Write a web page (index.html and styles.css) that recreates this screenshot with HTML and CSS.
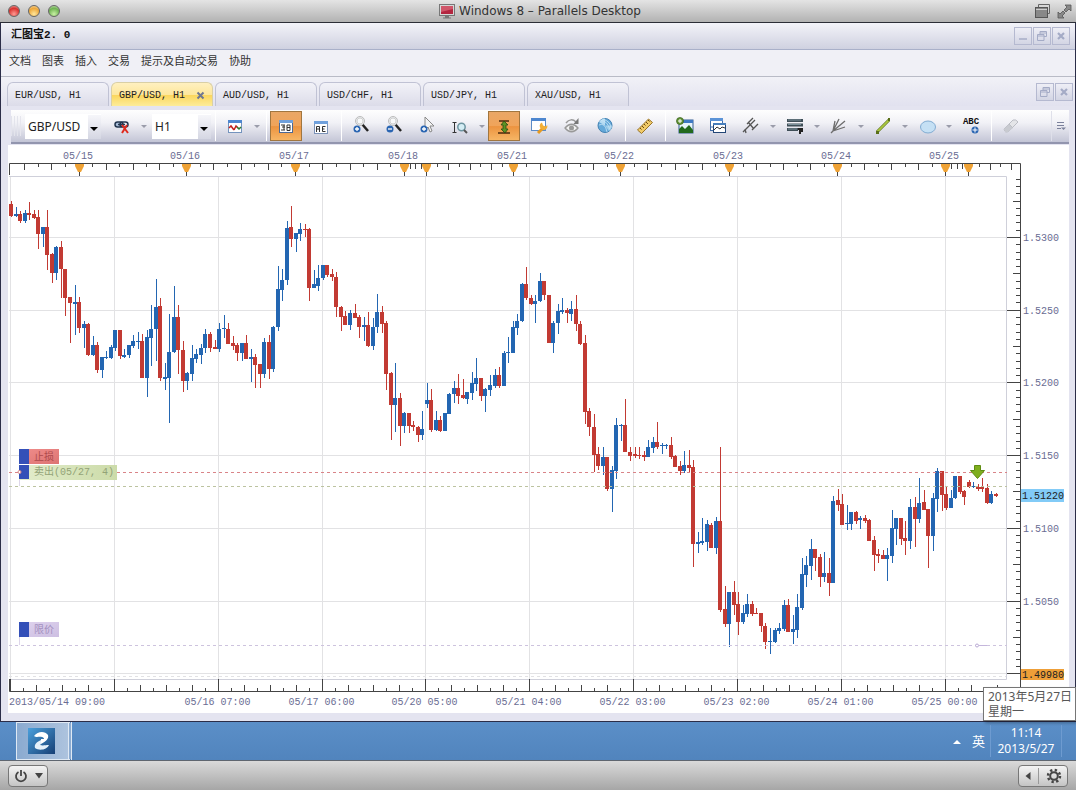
FILE: index.html
```
<!DOCTYPE html>
<html lang="zh-CN">
<head>
    <meta charset="UTF-8">
    <meta name="viewport" content="width=device-width, initial-scale=1.0">
    <title>Windows 8 – Parallels Desktop</title>
    <link rel="stylesheet" href="styles.css">
</head>
<body>

    <header class="mac-bar">
        <div class="lights">
            <button class="light red" aria-label="Close"></button>
            <button class="light yellow" aria-label="Minimize"></button>
            <button class="light green" aria-label="Zoom"></button>
        </div>
        <h1>
            <svg width="16" height="15" viewBox="0 0 16 15"><rect x=".5" y=".5" width="15" height="11" fill="#d5d8d8" stroke="#777"/><rect x="2" y="2" width="12" height="8" fill="#b32640"/><path d="M2 2h12v3L2 8z" fill="#d0566a"/><path d="M6 12h4v1.500h2v1H4v-1h2z" fill="#777"/></svg>
            Windows 8 – Parallels Desktop
        </h1>
        <div class="mac-right">
            <button aria-label="Windows"><svg width="15" height="15" viewBox="0 0 15 15"><path d="M3.500 3V.5h11v9H13" fill="none" stroke="#666"/><rect x=".5" y="3.500" width="12" height="10" fill="#888" stroke="#555"/><path d="M1 5.500h11" stroke="#ccc"/></svg></button>
            <button aria-label="Full screen"><svg width="15" height="15" viewBox="0 0 15 15"><path d="M8 1h6v6l-2-2-3 3-2-2 3-3zM1 8l2 2 3-3 2 2-3 3 2 2H1z" fill="#888" stroke="#555" stroke-width=".8"/></svg></button>
        </div>
    </header>

    <div class="app">
        <div class="app-title">
            <h2>汇图宝2. 0</h2>
            <div class="win-buttons">
                <button aria-label="最小化"><svg width="12" height="12" viewBox="0 0 12 12"><path d="M2 9h8" stroke="#b4b9d0" stroke-width="2"/></svg></button>
                <button aria-label="还原"><svg width="12" height="12" viewBox="0 0 12 12"><path d="M4 4V1.500h6.500v5H8M4 3h6M1.500 4.500H8v6H1.500zM2 6h6" fill="none" stroke="#a4abc6"/></svg></button>
                <button aria-label="关闭"><svg width="12" height="12" viewBox="0 0 12 12"><path d="M3 3l6 6M9 3l-6 6" stroke="#a4abc6" stroke-width="2.200"/></svg></button>
            </div>
        </div>

        <nav class="menu">
            <button>文档</button>
            <button>图表</button>
            <button>插入</button>
            <button>交易</button>
            <button>提示及自动交易</button>
            <button>协助</button>
        </nav>

        <div class="tabs">
            <button class="tab">EUR/USD, H1</button>
            <button class="tab active">GBP/USD, H1 <svg width="9" height="9" viewBox="0 0 9 9"><path d="M1.500 1.500l6 6M7.500 1.500l-6 6" stroke="#6f7791" stroke-width="2"/></svg></button>
            <button class="tab">AUD/USD, H1</button>
            <button class="tab">USD/CHF, H1</button>
            <button class="tab">USD/JPY, H1</button>
            <button class="tab">XAU/USD, H1</button>
            <div class="win-buttons">
                <button aria-label="还原图表"><svg width="12" height="12" viewBox="0 0 12 12"><path d="M4 4V1.500h6.500v5H8M4 3h6M1.500 4.500H8v6H1.500zM2 6h6" fill="none" stroke="#a4abc6"/></svg></button>
                <button aria-label="关闭图表"><svg width="12" height="12" viewBox="0 0 12 12"><path d="M3 3l6 6M9 3l-6 6" stroke="#a4abc6" stroke-width="2.200"/></svg></button>
            </div>
        </div>

        <div class="toolbar">
            <span class="grip"></span>
            <span class="combo symbol">
                <select aria-label="Symbol"><option>GBP/USD</option><option>EUR/USD</option></select>
            </span>
            <button class="tool" aria-label="Unlink"><svg width="18" height="18" viewBox="0 0 18 18"><rect x="2" y="5" width="8" height="5" rx="2.500" fill="#a9bdd8" stroke="#23364f" stroke-width="1.500"/><rect x="7" y="5" width="8" height="5" rx="2.500" fill="none" stroke="#23364f" stroke-width="1.500"/><path d="M5 7.500h7" stroke="#23364f" stroke-width="1.500"/><path d="M9 8l6 8M14 8l-5 8" stroke="#df2b1e" stroke-width="2"/></svg></button>
            <button class="drop" aria-label="Link options"></button>
            <span class="combo period">
                <select aria-label="Period"><option>H1</option><option>H4</option></select>
            </span>
            <span class="sep"></span>
            <button class="tool" aria-label="Chart type"><svg width="16" height="16" viewBox="0 0 16 16"><rect x="1.500" y="2.500" width="13" height="12" fill="#fff" stroke="#7493bd"/><path d="M1 2h14v3H1z" fill="#4d86cf"/><path d="M2 10l2-2 3 4" fill="none" stroke="#c4201c" stroke-width="1.500"/><path d="M7 12l2-4 2 2" fill="none" stroke="#c4201c" stroke-width="1.500"/><path d="M10 9l2 2 2-2" fill="none" stroke="#2c7a2b" stroke-width="1.500"/></svg></button>
            <button class="drop" aria-label="Chart types"></button>
            <span class="sep"></span>
            <button class="tool on" aria-label="Info panel"><svg width="16" height="16" viewBox="0 0 16 16"><rect x="1.500" y="2.500" width="13" height="12" fill="#fff" stroke="#4c6894"/><path d="M1 2h14v3H1z" fill="#6fa0dc"/><path d="M3 7h4M4 9h3M3 12h4M6 7v5M9 7v5.500h3V7zM9 9.500h3" fill="none" stroke="#333"/></svg></button>
            <button class="tool" aria-label="Labels"><svg width="16" height="16" viewBox="0 0 16 16"><rect x="1.500" y="3.500" width="13" height="12" fill="#fff" stroke="#7c93b8"/><path d="M1 3h14v3H1z" fill="#6fa0dc"/><path d="M3.500 14V8.500h3V14M3.500 11h3M12.500 8.500h-3v5h3M9.500 11h2" fill="none" stroke="#333"/></svg></button>
            <span class="sep"></span>
            <button class="tool" aria-label="Zoom in"><svg width="18" height="20" viewBox="0 0 18 20"><path d="M10 8l6 7" stroke="#222" stroke-width="2.500"/><circle cx="8" cy="5" r="4.500" fill="#e9ecef" stroke="#bbb"/><circle cx="8" cy="5" r="3" fill="#f8f9fa" stroke="#d0d0d0"/><circle cx="5" cy="13" r="3.500" fill="#2a65b2"/><path d="M5 11v4M3 13h4" stroke="#fff" stroke-width="1.300"/></svg></button>
            <button class="tool" aria-label="Zoom out"><svg width="18" height="20" viewBox="0 0 18 20"><path d="M10 8l6 7" stroke="#222" stroke-width="2.500"/><circle cx="8" cy="5" r="4.500" fill="#e9ecef" stroke="#bbb"/><circle cx="8" cy="5" r="3" fill="#f8f9fa" stroke="#d0d0d0"/><circle cx="5" cy="13" r="3.500" fill="#2a65b2"/><path d="M3 13h4" stroke="#fff" stroke-width="1.300"/></svg></button>
            <button class="tool" aria-label="Cursor"><svg width="18" height="20" viewBox="0 0 18 20"><path d="M7 1v13l3-3 2 5 2-1-2-5h4z" fill="#f4f4f4" stroke="#888"/><circle cx="6" cy="13" r="3.500" fill="#2a65b2"/><path d="M6 11v4M4 13h4" stroke="#fff" stroke-width="1.300"/></svg></button>
            <button class="tool" aria-label="Fit scale"><svg width="18" height="20" viewBox="0 0 18 20"><path d="M3.500 6v11M1.500 6.500h4M1.500 16.500h4" fill="none" stroke="#333"/><circle cx="10.500" cy="11" r="3.700" fill="#d4edf4" stroke="#6d95a1" stroke-width="1.500"/><path d="M13 14l3 3" stroke="#555" stroke-width="2"/></svg></button>
            <button class="drop" aria-label="Scale options"></button>
            <button class="tool on" aria-label="Auto scale"><svg width="18" height="20" viewBox="0 0 18 20"><path d="M4 5h10M3 17h12" stroke="#4b2a0c" stroke-width="1.300"/><path d="M9 5l4 4h-2v4h2l-3 4-4-4h2V9H6z" fill="#5b9224" stroke="#274d10" stroke-width=".8"/></svg></button>
            <button class="tool" aria-label="Settings"><svg width="18" height="20" viewBox="0 0 18 20"><rect x="1.500" y="2.500" width="14" height="12" fill="#fff" stroke="#5d8cc6"/><path d="M1 2h15v3H1z" fill="#4d86cf"/><path d="M8 17l5-5" stroke="#e79a20" stroke-width="3"/><path d="M12 6.500l1 3 3 1 1-1.500a3.500 3.500 0 0 1-6 3.500 3.500 3.500 0 0 1 1-6z" fill="#f2ae35"/></svg></button>
            <button class="tool" aria-label="Visibility"><svg width="18" height="20" viewBox="0 0 18 20"><path d="M2 12c4-5 9-5 13 0-4 5-9 5-13 0z" fill="#f0f0f0" stroke="#999" stroke-width="1.300"/><circle cx="8.500" cy="12" r="2.500" fill="#999"/><path d="M3 7c3-4 7-4 10-1" fill="none" stroke="#999" stroke-width="1.500"/><path d="M15.500 2v6h-5z" fill="#777"/></svg></button>
            <button class="tool" aria-label="Globe"><svg width="18" height="18" viewBox="0 0 18 18"><circle cx="9" cy="8.500" r="7" fill="#65a9d9" stroke="#4382b3"/><path d="M9 8.500V1.500A7 7 0 0 0 3 5z" fill="#b6dcf3"/><path d="M9 8.500h7a7 7 0 0 1-3 5.500z" fill="#a1cfeb"/><path d="M5 3.500q6 0 9 9M3 8q6-3 8 7M7 2q8 3 8 9" fill="none" stroke="#c9e6f6" stroke-width=".8"/></svg></button>
            <span class="sep"></span>
            <button class="tool" aria-label="Ruler"><svg width="18" height="18" viewBox="0 0 18 18"><path d="M1.500 13L12.500 2l4 3.500-11 11z" fill="#f1cb69" stroke="#987327"/><path d="M4 11l1.500 1.500M6 9l2 2M8 7l1.500 1.500M10 5l2 2M12 3l1.500 1.500" stroke="#6d4b13"/></svg></button>
            <span class="sep"></span>
            <button class="tool" aria-label="Add picture"><svg width="18" height="18" viewBox="0 0 18 18"><rect x="3" y="3" width="14" height="13" fill="#e6f3fb" stroke="#345e91"/><path d="M3 3h14v3H3z" fill="#3e79c4"/><path d="M3 16v-4l3-3 3 3 4-4 4 5v3z" fill="#22691d"/><circle cx="4" cy="4" r="3.500" fill="#659638" stroke="#355b18" stroke-width=".7"/><path d="M4 2v4M2 4h4" stroke="#fff"/></svg></button>
            <button class="tool" aria-label="Windows"><svg width="18" height="20" viewBox="0 0 18 20"><rect x="1.500" y="2.500" width="12" height="12" fill="#fff" stroke="#426ea8"/><path d="M1 2h13v3H1z" fill="#5b93d7"/><rect x="4.500" y="7.500" width="12" height="9" fill="#fff" stroke="#234676"/><path d="M4 7h13v2H4z" fill="#477ebc"/><path d="M5 14l3-3 3 2 2-2 3 1" fill="none" stroke="#333"/><path d="M1 11h3" stroke="#426ea8"/></svg></button>
            <button class="tool" aria-label="Pitchfork"><svg width="18" height="18" viewBox="0 0 18 18"><path d="M1 15L13 3M6 5l6 7M5 7l6-6M10 13l6-6M3 12l1 4" fill="none" stroke="#555" stroke-width="1.300"/></svg></button>
            <button class="drop" aria-label="Pitchforks"></button>
            <button class="tool" aria-label="Fibonacci"><svg width="18" height="20" viewBox="0 0 18 20"><path d="M1 4.500h16M1 9h16M1 13.500h11" stroke="#3f4e57" stroke-width="3"/><path d="M2 4h13M2 8.500h13M2 13h9" stroke="#8aa2ac" stroke-width=".8"/><path d="M12 13h4v2h-2v3" fill="none" stroke="#222" stroke-width="2"/></svg></button>
            <button class="drop" aria-label="Fibonacci tools"></button>
            <button class="tool" aria-label="Fan"><svg width="18" height="18" viewBox="0 0 18 18"><path d="M3 14L5 4M3 14l6-12M3 14L15 4M3 14l12-4M1 16l3-3" stroke="#6d6d6d" stroke-width="1.300"/></svg></button>
            <button class="drop" aria-label="Fans"></button>
            <button class="tool" aria-label="Line"><svg width="18" height="20" viewBox="0 0 18 20"><path d="M3 16L15 4" stroke="#596f18" stroke-width="3"/><path d="M3 16L15 4" stroke="#a9c541" stroke-width="1.800"/><path d="M2 15h3v3H2zM14 2h2v3h-2z" fill="#596f18"/></svg></button>
            <button class="drop" aria-label="Lines"></button>
            <button class="tool" aria-label="Ellipse"><svg width="18" height="20" viewBox="0 0 18 20"><ellipse cx="10" cy="11" rx="7.500" ry="6" fill="#c5e0f4" stroke="#81acd2"/></svg></button>
            <button class="drop" aria-label="Shapes"></button>
            <button class="tool text-tool" aria-label="Add text"><b>ABC</b><svg width="8" height="8" viewBox="0 0 8 8"><circle cx="4" cy="4" r="3.500" fill="#2a65b2"/><path d="M4 1.500v5M1.500 4h5" stroke="#fff"/></svg></button>
            <span class="sep"></span>
            <button class="tool" aria-label="Eraser"><svg width="18" height="18" viewBox="0 0 18 18"><path d="M2 12l9-9q3-1 5 2L7 14q-4 3-5-2z" fill="#e4e5e8" stroke="#bbbdc4"/><path d="M7 7l4 4" stroke="#b2b4bb"/><path d="M2 12l5-5 4 4-4 3q-4 3-5-2z" fill="#c8cad0"/></svg></button>
            <button class="more" aria-label="More"><svg width="10" height="10" viewBox="0 0 10 10"><path d="M1 1.500h7M1 4.500h7M1 7.500h4" stroke="#7b819b"/><path d="M5 6.500h5L7.500 9z" fill="#7b819b"/></svg></button>
        </div>

        <div class="chart-panel">
            <svg id="chart" viewBox="8 145 1061 568" role="img" aria-label="GBP/USD H1">
                <defs>
                    <linearGradient id="sellFill" x2="1"><stop offset="0" stop-color="#e3edcc"/><stop offset="1" stop-color="#ccdba9"/></linearGradient>
                    <linearGradient id="stopFill" y2="1"><stop offset="0" stop-color="#f08d8b"/><stop offset="1" stop-color="#dd7473"/></linearGradient>
                    <linearGradient id="limitFill" y2="1"><stop offset="0" stop-color="#dfd3ee"/><stop offset="1" stop-color="#cdbfe2"/></linearGradient>
                </defs>
                <g id="grid"></g>
                <g id="candles"></g>
                <g id="axes"></g>

                <g class="orders">
                    <path class="dash stop" d="M9 472.500h998"/>
                    <path class="dash sell" d="M9 486.500h998"/>
                    <path class="dash limit" d="M9 645.500h998"/>
                    <path d="M19.500 479v7M19.500 637v8" stroke="#ddd6ea"/>
                    <rect x="19" y="449" width="40" height="15" fill="url(#stopFill)"/>
                    <rect x="19" y="465" width="98" height="15" fill="url(#sellFill)"/>
                    <rect x="19" y="622" width="40" height="15" fill="url(#limitFill)"/>
                    <path d="M19 449h10v15H19zM19 465h10v14H19zM19 622h10v15H19z" fill="#3450b8"/>
                    <circle cx="19.500" cy="472" r="1.500" fill="#fff" stroke="#d98a8a"/>
                    <circle cx="977" cy="645.500" r="1.500" fill="#fff" stroke="#b9a9d4"/>
                    <path d="M979 645.500h8" stroke="#c4b6dc"/>
                    <text x="34" y="460" fill="#ae4a4c">止损</text>
                    <text x="34" y="475" fill="#93a377">卖出(05/27, 4)</text>
                    <text x="34" y="633" fill="#a28fbe">限价</text>
                    <path d="M974.500 465.500h6v5h4l-7 8-7-8h4z" fill="#7fae1e" stroke="#5f8c12"/>
                </g>

                <rect x="1021" y="489" width="43" height="13" fill="#82cbf7"/>
                <rect x="1021" y="669" width="43" height="11" fill="#ee9f38"/>
                <text class="price-tag" x="1022" y="499">1.51220</text>
                <text class="price-tag" x="1022" y="678">1.49980</text>
            </svg>
        </div>
    </div>

    <div class="taskbar">
        <button class="task" aria-label="汇图宝">
            <svg width="28" height="28" viewBox="0 0 28 28"><defs><linearGradient id="logo" x2="1" y2="1"><stop offset="0" stop-color="#4ba0dc"/><stop offset="1" stop-color="#163f75"/></linearGradient></defs><rect y="1" width="27" height="26" fill="url(#logo)"/><path d="M6 9c4-5 11-5 14-1 1 4-2 6-7 9v-5h3c0-1-1-2-2-2-3-1-5 1-8-1z" fill="#fff"/><path d="M21 18c-2 5-10 6-14 3-1-4 2-6 6-8v4l-1 1c3 1 5 0 9 0z" fill="#e4f0fa"/></svg>
        </button>
        <div class="tray">
            <svg width="8" height="5" viewBox="0 0 8 5"><path d="M0 5l4-4 4 4z" fill="#fff"/></svg>
            <span class="ime">英</span>
            <div class="clock">
                <time>11:14</time>
                <time>2013/5/27</time>
                <div class="tooltip"><p>2013年5月27日</p><p>星期一</p></div>
            </div>
        </div>
    </div>

    <footer class="vm-bar">
        <button class="vm-button" aria-label="Power">
            <svg width="14" height="14" viewBox="0 0 14 14"><path d="M4.500 3a5 5 0 1 0 5 0M7 1v6" fill="none" stroke="#444" stroke-width="1.800"/></svg>
            <svg width="8" height="6" viewBox="0 0 8 6"><path d="M0 0h8L4 5.500z" fill="#444"/></svg>
        </button>
        <button class="vm-button right" aria-label="Devices">
            <svg width="6" height="8" viewBox="0 0 6 8"><path d="M5.500 0v8L.5 4z" fill="#444"/></svg>
            <span class="line"></span>
            <svg width="16" height="16" viewBox="0 0 16 16"><circle cx="8" cy="8" r="3.800" fill="none" stroke="#444" stroke-width="2"/><circle cx="8" cy="8" r="6" fill="none" stroke="#444" stroke-width="2.500" stroke-dasharray="2.300 2.412"/></svg>
        </button>
    </footer>

    <script src="chart.js"></script>
</body>
</html>
```

FILE: styles.css
```
* {
    padding: 0;
    margin: 0;
    box-sizing: border-box;
}

body {
    min-height: 100vh;
    display: flex;
    flex-direction: column;
    background-color: #b5b5b5;
    font-family: "Noto Sans", "Noto Sans CJK SC", sans-serif;
}

button {
    border: none;
    background: none;
    font: inherit;
    color: inherit;
}

svg {
    display: block;
    flex-shrink: 0;
}

/* host window title */

.mac-bar {
    height: 23px;
    display: grid;
    grid-template-columns: 1fr auto 1fr;
    align-items: center;
    padding: 0 4px 0 8px;
    background: linear-gradient(#e4e4e4, #b2b2b2);
    border-bottom: 1px solid #2b2d36;
}

.mac-bar h1 {
    display: flex;
    align-items: center;
    gap: 4px;
    font-family: "DejaVu Sans", sans-serif;
    font-size: 12px;
    font-weight: normal;
    line-height: 20px;
    color: #333;
}

.lights {
    display: flex;
    gap: 8px;
}

.light {
    width: 12px;
    height: 12px;
    border-radius: 50%;
    border: 1px solid #666;
}

.red {
    background: radial-gradient(circle at 50% 80%, #ff9c94, #d8312e 60%, #f0b0ac);
}

.yellow {
    background: radial-gradient(circle at 50% 80%, #ffe79c, #eda73a 60%, #f8dfae);
}

.green {
    background: radial-gradient(circle at 50% 80%, #c9f0a5, #6fb352 60%, #cde6bd);
}

.mac-right {
    display: flex;
    justify-content: flex-end;
    gap: 7px;
}

/* application window */

.app {
    background-color: #e4e4f0;
    border: 1px solid #2b2d48;
    border-top: none;
}

.app-title {
    height: 27px;
    display: flex;
    align-items: center;
    justify-content: space-between;
    padding: 0 5px 0 10px;
    background: linear-gradient(#f3f3f9, #cfd1e0);
    border-bottom: 1px solid #a9b0c9;
}

.app-title h2 {
    font-family: "Liberation Mono", "Noto Sans CJK SC", monospace;
    font-size: 11px;
    line-height: 16px;
    padding-bottom: 2px;
    color: #111;
}

.win-buttons {
    display: flex;
    gap: 1px;
}

.win-buttons button {
    width: 18px;
    height: 18px;
    display: flex;
    align-items: center;
    justify-content: center;
    background: linear-gradient(#eeeef6, #d3d5e4);
    border: 1px solid #b5b9d0;
}

.menu {
    height: 27px;
    display: flex;
    align-items: center;
    gap: 11px;
    padding: 0 8px 4px;
    background-color: #f0f0f6;
    border-bottom: 1px solid #b9bbc6;
    font-size: 11px;
    line-height: 16px;
    color: #333;
}

.tabs {
    height: 29px;
    display: flex;
    align-items: flex-end;
    gap: 2px;
    padding: 0 2px 0 6px;
    background: linear-gradient(#f1f1f7, #e2e2ef);
}

.tabs .win-buttons {
    margin-left: auto;
    align-self: center;
}

.tab {
    width: 102px;
    height: 24px;
    display: flex;
    align-items: center;
    justify-content: space-between;
    padding: 1px 7px 0;
    border: 1px solid #c0c2d4;
    border-bottom: none;
    border-radius: 6px 6px 0 0;
    background: linear-gradient(#f2f2f8, #dcdce9);
    font-family: "Liberation Mono", "Noto Sans CJK SC", monospace;
    font-size: 10px;
    color: #222;
    white-space: nowrap;
}

.tab.active {
    background: linear-gradient(#fff0c0, #fde79d 50%, #fbd65c 52%, #fdec9a);
    border-color: #d9cfa5;
}

/* toolbar */

.toolbar {
    height: 34px;
    display: flex;
    align-items: center;
    gap: 1px;
    margin: 4px 6px 1px 10px;
    background: linear-gradient(#fefefe, #f1f1f6 40%, #c3c5d6);
    border-bottom: 2px solid #9295ae;
}

.grip {
    width: 10px;
    height: 20px;
    border-right: 1px solid #e6e6ee;
    background: repeating-linear-gradient(90deg, #e3e4ec 0 1px, transparent 1px 3px);
}

.combo {
    position: relative;
    height: 24px;
    display: block;
    background-color: #fff;
}

.symbol {
    width: 76px;
    margin: 0 4px 0 3px;
}

.period {
    width: 59px;
    margin: 0 0 0 2px;
}

.combo select {
    appearance: none;
    width: 100%;
    height: 24px;
    padding-left: 3px;
    border: none;
    background: linear-gradient(#f6f6fa, #d5d7e3) right / 13px 100% no-repeat #fff;
    font-family: "Noto Sans", sans-serif;
    font-size: 12px;
    color: #222;
}

/* arrow over the select */
.combo::after {
    content: "";
    position: absolute;
    right: 3px;
    top: 13px;
    border: 4px solid transparent;
    border-top-color: #000;
    pointer-events: none;
}

.sep {
    width: 1px;
    height: 30px;
    margin: 0 2px 0 3px;
    background-color: #dfe0ea;
    border-right: 1px solid #fff;
}

.tool {
    width: 32px;
    height: 30px;
    display: flex;
    align-items: center;
    justify-content: center;
}

.tool.on {
    margin-right: 2px;
    border: 1px solid #a1763f;
    background: linear-gradient(#e9a766, #f0a45a 50%, #ec9440 52%, #f6b565);
}

.text-tool {
    flex-direction: column;
}

.text-tool b {
    font-family: "Liberation Mono", monospace;
    font-size: 9px;
    line-height: 8px;
    color: #111;
}

.text-tool svg {
    align-self: flex-end;
    margin-right: 8px;
}

.drop {
    width: 10px;
    height: 30px;
    display: flex;
    align-items: center;
    justify-content: center;
}

.drop::before {
    content: "";
    border: 3px solid transparent;
    border-top-color: #9a9caa;
    margin-top: 4px;
}

.more {
    width: 18px;
    height: 30px;
    margin-left: auto;
    display: flex;
    align-items: center;
    justify-content: center;
    border-left: 1px solid #dfe0ea;
}

/* chart */

.chart-panel {
    margin: 0 6px 8px 7px;
    background-color: #fff;
}

#chart {
    width: 100%;
    height: auto;
}

#chart text {
    font-family: "Liberation Mono", "Noto Sans CJK SC", monospace;
    font-size: 10px;
}

.axis-label {
    fill: #6a6d93;
}

.center {
    text-anchor: middle;
}

.price-tag {
    fill: #222;
}

.gridline {
    stroke: #e2e2e4;
}

.frame {
    fill: none;
    stroke: #cfd0da;
}

.axis {
    fill: none;
    stroke: #444;
}

.marker {
    fill: #efa235;
}

.up {
    fill: #2366b2;
}

.down {
    fill: #c23a33;
}

.dash {
    stroke-dasharray: 3 3;
}

.stop {
    stroke: #d98488;
}

.sell {
    stroke: #bcc3a0;
}

.limit {
    stroke: #cdc3de;
}

/* guest taskbar */

.taskbar {
    height: 39px;
    display: flex;
    align-items: center;
    justify-content: space-between;
    padding: 0 14px 0 16px;
    background: linear-gradient(#5b8fc8, #5184bd);
    border-bottom: 1px solid #5f6670;
    color: #fff;
}

.task {
    width: 56px;
    height: 38px;
    display: flex;
    align-items: center;
    padding-left: 11px;
    border: 1px solid #dfe9f4;
    border-right: 4px double #dfe9f4;
    background: linear-gradient(90deg, #8aaad0, #adc3de);
}

.tray {
    display: flex;
    align-items: center;
    gap: 11px;
}

.ime {
    font-size: 13px;
    line-height: 16px;
    margin-right: -6px;
}

.clock {
    position: relative;
    width: 72px;
    border-left: 1px solid #6e9bd0;
    border-right: 1px solid #6e9bd0;
    text-align: center;
}

.clock time {
    display: block;
    font-size: 12px;
    line-height: 16px;
}

.tooltip {
    position: absolute;
    right: -15px;
    bottom: 36px;
    width: 93px;
    padding: 1px 4px;
    background-color: #fff;
    border: 1px solid #767676;
    box-shadow: 2px 2px 3px rgba(0, 0, 0, 0.3);
    color: #575757;
    font-family: "Noto Sans", "Noto Sans CJK SC", sans-serif;
    font-size: 12px;
    line-height: 15px;
    text-align: left;
    white-space: nowrap;
}

/* host status bar */

.vm-bar {
    height: 29px;
    display: flex;
    align-items: center;
    justify-content: space-between;
    padding: 0 8px;
    background: linear-gradient(#dadada, #a6a6a6);
}

.vm-button {
    height: 22px;
    width: 40px;
    display: flex;
    align-items: center;
    justify-content: center;
    gap: 7px;
    border: 1px solid #777;
    border-radius: 4px;
    background: linear-gradient(#f4f4f4, #c4c4c4);
}

.vm-button.right {
    width: 50px;
}

.line {
    width: 1px;
    height: 16px;
    background-color: #999;
}
```

FILE: chart.js
```
// each bar: direction, high, body top, body bottom, low
// values are in thirds of a pixel below the top of the block
const blocks = [
    { top: 190, first: 0, bars: `r 32 41 78 82,b 52 72 78 82,r 64 72 93 100,b 60 69 93 98,r 35 69 75 90,r 60 72 83 87,
r 60 81 132 176,b 110 110 132 170,r 60 110 195 240,r 190 193 248 279,b 168 171 248 271,r 153 171 238 325,
r 237 237 323 377,r 320 321 339 458,b 286 336 341 435,r 320 335 413 430,b 392 401 413 473,r 398 401 496 497,
b 438 465 496 497,r 456 465 540 550,b 501 501 540 565,b 484 502 504 506,b 465 471 504 507,b 421 421 473 484,
r 421 421 498 507,b 478 495 500 503,b 465 465 495 503,b 435 453 467 473,b 427 453 455 478,r 433 453 563 564,
b 421 441 563 620,b 346 416 443 528,b 267 350 418 513,r 323 349 564 573,b 519 561 566 600,b 372 486 563 698,
b 288 381 487 488,r 345 381 480 552,r 453 479 573 605,b 546 549 573 600,b 465 505 551 573,b 476 492 507 518,
b 462 474 495 521,b 418 433 475 490,r 427 433 473 486,r 450 471 476 478,b 400 416 476 485,b 375 415 417 443,
r 400 416 462 463,r 438 459 467 480,r 459 465 490 514,b 459 459 490 514,r 435 459 507 508,b 478 501 506 575,
r 492 501 525 594,r 522 522 551 594,b 444 456 551 563,r 435 456 537 566,b 408 411 537 545,b 228 297 411 423,
b 237 269 299 334,b 93 113 270 285,r 48 112 147 170,b 130 130 147 187,b 98 116 132 153,r 101 116 119 142,
r 114 116 294 334,b 240 283 293 294,b 225 263 287 302,b 225 225 265 269,r 225 225 255 260,r 237 252 261 273,
r 246 260 351 381,r 348 350 380 422,r 363 378 404 405,b 360 369 404 419,r 343 369 384 384,r 376 380 411 444,
b 380 405 411 453,r 366 404 467 470,b 384 410 467 479,b 311 366 411 428,r 348 366 401 430,r 393 398 551 600,
r 547 549 646 750,b 519 623 646 727,r 608 623 707 768,b 667 669 707 729,r 669 669 707 729,r 692 705 711 724,
r 708 710 735 756,b 663 717 735 750` },
    { top: 250, first: 92, bars: `b 400 450 462 474,r 417 450 540 546,b 484 510 540 543,r 498 510 543 546,b 489 489 543 544,
b 430 432 491 492,b 393 414 433 460,r 373 414 437 461,r 388 434 445 446,b 426 426 446 463,b 365 400 428 450,
b 324 385 402 422,r 384 385 437 453,b 414 417 437 486,b 376 404 419 437,b 357 376 408 413,r 350 376 408 413,
b 302 308 408 409,b 261 306 310 338,b 213 230 308 310,b 192 212 233 255,b 100 102 213 216,r 51 102 145 150,
r 135 143 163 164,b 135 152 163 219,b 70 94 154 157,r 94 94 136 151,r 135 135 279 280,b 213 218 279 310,
b 163 183 220 253,b 145 181 186 192,r 175 181 190 218,b 153 177 192 213,r 135 177 222 242,r 213 221 282 285,
r 255 279 486 521,r 475 483 531 558,r 492 530 615 665` },
    { top: 380, first: 130, bars: `r 200 222 258 270,b 200 232 258 284,r 232 232 327 332,b 258 270 327 395,b 114 136 272 297,
b 133 134 138 182,r 58 134 216 217,r 200 215 227 242,r 200 222 227 235,r 200 225 229 236,r 214 226 231 243,
b 180 201 231 231,b 171 186 203 219,r 127 186 201 208,b 189 194 199 222,b 191 194 197 207,r 171 194 231 236,
r 224 229 261 262,r 243 258 272 284,b 212 255 272 280,r 209 255 263 276,r 240 261 492 560,b 457 487 492 520,
b 414 484 489 496,b 420 433 486 512,r 428 434 503 504,b 411 422 503 522,r 200 422 690 696,r 618 687 732 741,
b 636 636 732 800,r 603 636 676 705,r 636 673 726 765,b 676 699 726 733,b 643 673 702 711,r 664 673 702 708,
r 684 698 701 702,r 698 699 738 756,r 728 737 786 808,b 745 783 786 823,b 745 750 786 789,b 730 745 753 762,
b 661 676 747 753,r 658 675 756 757` },
    { top: 440, first: 173, bars: `b 525 568 576 612,b 461 502 571 594,b 354 403 504 510,b 348 376 406 440,b 296 328 378 420,
r 326 328 353 392,r 343 352 411 440,b 336 399 411 427,r 354 398 429 467,b 169 182 429 430,r 147 181 195 212,
r 163 192 254 255,b 196 249 253 271,b 215 217 251 270,r 213 216 243 252,b 229 235 241 267,r 225 234 242 248,
r 237 239 303 303,r 289 300 345 392,r 327 343 347 370,r 331 346 357 357,b 324 345 357 424,b 210 265 348 368,
b 234 234 267 315,r 234 234 297 314,r 243 294 303 346,b 177 201 303 326,r 172 201 237 320,b 115 188 237 248,
r 150 187 209 210,r 206 207 288 383,b 158 174 288 332,b 84 94 176 215,r 92 92 165 212,r 141 162 205 209,
b 150 174 205 205,b 108 108 175 176,r 108 108 157 162,r 150 153 170 196,r 120 126 141 143,b 126 139 142 143,
r 131 140 146 154,r 114 140 146 156,r 132 144 190 191,b 152 162 190 191,r 160 162 169 171` }
];

const grid = document.getElementById('grid');
const candles = document.getElementById('candles');
const axes = document.getElementById('axes');

const gridX = (n) => Math.round(11 + n * 103.85) - 0.5;
const gridY = (n) => Math.round(237 + n * 72.7) + 0.5;

const drawGrid = () => {
    let out = '';
    for (let n = 0; n < 10; n++) {
        out += `<path class="gridline" d="M${gridX(n)} 176V679"/>`;
    }
    for (let n = 0; n < 7; n++) {
        out += `<path class="gridline" d="M9 ${gridY(n)}H1006"/>`;
    }
    out += '<path class="frame" d="M9 176.5H1006.5V679.5H9"/>';
    out += '<path class="gridline dash" d="M9 676.5H1006"/>';
    grid.innerHTML = out;
};

const drawCandles = () => {
    let out = '';
    blocks.forEach(block => {
        block.bars.split(',').forEach((bar, i) => {
            const [dir, ...v] = bar.trim().split(' ');
            const [high, open, close, low] = v.map(n => Math.round(block.top + n / 3));
            const x = Math.round(9.3 + (block.first + i) * 4.516);
            const cls = dir === 'b' ? 'up' : 'down';
            out += `<rect class="${cls}" x="${x + 2}" y="${high}" width="1" height="${Math.max(low - high, 1)}"/>`;
            out += `<rect class="${cls}" x="${x}" y="${open}" width="4" height="${Math.max(close - open, 1)}"/>`;
        });
    });
    candles.innerHTML = out;
};

const drawAxes = () => {
    let d = 'M9.5 175V163.5H1020.5V691.5H9.5V679M10.5 679V691';

    // top ruler, days
    const days = [79, 186, 295, 404, 426, 513, 620, 729, 837, 945, 968];
    const tick = (x, len) => { d += `M${Math.round(x) + 0.5} 164v${len}`; };
    [24, 51].forEach(x => tick(x, 6));
    [38, 65].forEach(x => tick(x, 3));
    days.forEach((x, i) => {
        tick(x, 12);
        const next = days[i + 1];
        if (!next) return;
        const parts = next - x < 30 ? 4 : (x === 426 ? 8 : 8);
        for (let k = 1; k < parts; k++) {
            tick(x + (next - x) * k / parts, parts === 4 ? 5 : (k % 2 ? 3 : 6));
        }
    });
    [979, 1000].forEach(x => tick(x, 3));
    [990, 1011].forEach(x => tick(x, 6));

    // bottom ruler, hours
    for (let k = 1; k <= 76; k++) {
        const x = Math.round(11 + k * 103.85 / 8) - 0.5;
        const len = k % 8 === 0 ? 12 : (k % 2 ? 3 : 6);
        d += `M${x} 691v${-len}`;
    }

    // price ruler
    for (let k = -8; k <= 60; k++) {
        const y = Math.round(237 + k * 7.27) + 0.5;
        const len = k % 10 === 0 ? 13 : (k % 5 === 0 ? 7 : 4);
        d += `M1020 ${y}h${-len}`;
    }

    let out = `<path class="axis" d="${d}"/>`;
    days.forEach(x => {
        out += `<path class="marker" d="M${x - 4} 164h9v2l-3 6h-3l-3-6z"/>`;
    });

    const labels = ['05/15', '05/16', '05/17', '05/18', '05/21', '05/22', '05/23', '05/24', '05/25'];
    const labelDays = days.filter(x => x !== 426 && x !== 968);
    labels.forEach((label, i) => {
        out += `<text class="axis-label center" x="${labelDays[i] - 1}" y="159">${label}</text>`;
    });

    const hours = ['05/16 07:00', '05/17 06:00', '05/20 05:00', '05/21 04:00', '05/22 03:00', '05/23 02:00', '05/24 01:00', '05/25 00:00'];
    out += '<text class="axis-label" x="9" y="705">2013/05/14 09:00</text>';
    hours.forEach((label, i) => {
        out += `<text class="axis-label center" x="${gridX(i + 2) - 1}" y="705">${label}</text>`;
    });

    ['1.5300', '1.5250', '1.5200', '1.5150', '1.5100', '1.5050'].forEach((label, i) => {
        out += `<text class="axis-label" x="1023" y="${Math.round(gridY(i)) + 3}">${label}</text>`;
    });
    axes.innerHTML = out;
};

drawGrid();
drawCandles();
drawAxes();
```
